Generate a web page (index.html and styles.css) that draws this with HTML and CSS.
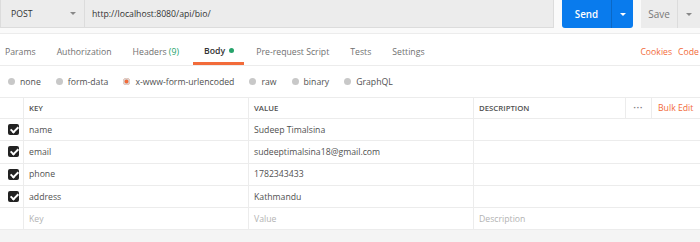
FILE: index.html
```html
<!DOCTYPE html>
<html lang="en">
<head>
    <meta charset="UTF-8">
    <title>POST bio</title>
    <link rel="stylesheet" href="styles.css">
</head>
<body>
    <div class="request-bar">
        <div class="method">
            <span>POST</span>
            <span class="caret"></span>
        </div>
        <div class="url">http://localhost:8080/api/bio/</div>
        <div class="send">
            <span class="send-label">Send</span>
            <span class="send-drop"><span class="caret white"></span></span>
        </div>
        <div class="save">
            <span class="save-label">Save</span>
            <span class="save-drop"><span class="caret"></span></span>
        </div>
    </div>

    <div class="tabs">
        <span class="tab">Params</span>
        <span class="tab">Authorization</span>
        <span class="tab">Headers <span class="count">(9)</span></span>
        <span class="tab active">Body <span class="dot"></span></span>
        <span class="tab">Pre-request Script</span>
        <span class="tab">Tests</span>
        <span class="tab">Settings</span>
        <span class="tab-links"><span>Cookies</span><span>Code</span></span>
    </div>

    <div class="body-types">
        <label class="radio"><span class="circle"></span>none</label>
        <label class="radio"><span class="circle"></span>form-data</label>
        <label class="radio"><span class="circle checked"></span>x-www-form-urlencoded</label>
        <label class="radio"><span class="circle"></span>raw</label>
        <label class="radio"><span class="circle"></span>binary</label>
        <label class="radio"><span class="circle"></span>GraphQL</label>
    </div>

    <div class="kv-table">
        <div class="kv-row head">
            <div class="cell check"></div>
            <div class="cell key">KEY</div>
            <div class="cell value">VALUE</div>
            <div class="cell desc">DESCRIPTION</div>
            <div class="cell more">&bull;&bull;&bull;</div>
            <div class="cell bulk">Bulk Edit</div>
        </div>
        <div class="kv-row">
            <div class="cell check"><span class="box"></span></div>
            <div class="cell key">name</div>
            <div class="cell value">Sudeep Timalsina</div>
            <div class="cell desc wide"></div>
        </div>
        <div class="kv-row">
            <div class="cell check"><span class="box"></span></div>
            <div class="cell key">email</div>
            <div class="cell value">sudeeptimalsina18@gmail.com</div>
            <div class="cell desc wide"></div>
        </div>
        <div class="kv-row">
            <div class="cell check"><span class="box"></span></div>
            <div class="cell key">phone</div>
            <div class="cell value">1782343433</div>
            <div class="cell desc wide"></div>
        </div>
        <div class="kv-row">
            <div class="cell check"><span class="box"></span></div>
            <div class="cell key">address</div>
            <div class="cell value">Kathmandu</div>
            <div class="cell desc wide"></div>
        </div>
        <div class="kv-row placeholder">
            <div class="cell check"></div>
            <div class="cell key">Key</div>
            <div class="cell value">Value</div>
            <div class="cell desc wide">Description</div>
        </div>
    </div>
    <div class="footer"></div>
</body>
</html>
```

FILE: styles.css
```css
body {
    margin: 0;
    font-family: "Open Sans", "Noto Sans", sans-serif;
    font-size: 8.7px;
    color: #505050;
    background: #fff;
    width: 700px;
    height: 242px;
    overflow: hidden;
}
.request-bar {
    display: flex;
    height: 28px;
    padding-bottom: 5px;
    background: #fafafa;
    border-bottom: 1px solid #ececec;
}
.method {
    width: 85px;
    box-sizing: border-box;
    display: flex;
    align-items: center;
    justify-content: space-between;
    padding: 0 8px 0 10px;
    background: #ececec;
    border: 1px solid #dcdcdc;
    border-top: none;
    color: #333;
}
.caret {
    width: 0;
    height: 0;
    border-left: 3px solid transparent;
    border-right: 3px solid transparent;
    border-top: 3px solid #888;
}
.caret.white {
    border-top-color: #fff;
}
.url {
    width: 469px;
    box-sizing: border-box;
    display: flex;
    align-items: center;
    padding-left: 7px;
    background: #ececec;
    border: 1px solid #dcdcdc;
    border-left: none;
    border-top: none;
    color: #333;
}
.send {
    display: flex;
    margin-left: 8px;
    width: 71px;
    background: #097bed;
    border-radius: 0 0 3px 3px;
    color: #fff;
    font-weight: 600;
    font-size: 9.8px;
}
.send-label {
    width: 49px;
    display: flex;
    align-items: center;
    justify-content: center;
}
.send-drop {
    flex: 1;
    display: flex;
    align-items: center;
    justify-content: center;
    border-left: 1px solid #0a68c6;
}
.save {
    display: flex;
    margin-left: 8px;
    flex: 1;
    background: #ececec;
    color: #777;
    font-size: 10px;
}
.save-label {
    width: 36px;
    display: flex;
    align-items: center;
    justify-content: center;
}
.save-drop {
    flex: 1;
    display: flex;
    align-items: center;
    justify-content: center;
    border-left: 1px solid #dcdcdc;
}
.tabs {
    display: flex;
    align-items: flex-end;
    height: 31px;
    padding-left: 5px;
    border-bottom: 1px solid #ececec;
    color: #707070;
}
.tab {
    margin-right: 21px;
    height: 31px;
    padding-top: 6px;
    line-height: 25px;
    box-sizing: border-box;
    white-space: nowrap;
}
.tab.active {
    color: #333;
    font-weight: 600;
    border-bottom: 3px solid #f26b3a;
    padding: 6px 10px 0 11px;
    margin-left: -7px;
    margin-right: 12px;
    line-height: 22px;
}
.count {
    color: #26a36b;
}
.dot {
    display: inline-block;
    width: 5px;
    height: 5px;
    border-radius: 50%;
    background: #26a36b;
    margin-left: 2px;
    vertical-align: 1px;
}
.tab-links {
    margin-left: auto;
    color: #f26b3a;
    display: flex;
    gap: 6px;
    padding-right: 1px;
    height: 31px;
    padding-top: 6px;
    line-height: 25px;
    box-sizing: border-box;
}
.body-types {
    display: flex;
    align-items: center;
    height: 31px;
    padding-left: 8px;
    color: #505050;
}
.radio {
    display: flex;
    align-items: center;
    margin-right: 15px;
}
.circle {
    width: 7px;
    height: 7px;
    border-radius: 50%;
    background: #c8c8c8;
    margin-right: 5px;
}
.circle.checked {
    background: #f26b3a;
    box-shadow: inset 0 0 0 1.5px #d8d8d8;
}
.kv-table {
    border-top: 1px solid #ececec;
}
.kv-row {
    display: flex;
    height: 21.3px;
    border-bottom: 1px solid #ececec;
}
.kv-row.head {
    height: 20px;
    font-size: 7.8px;
    font-weight: 600;
    color: #505050;
}
.cell {
    display: flex;
    align-items: center;
    box-sizing: border-box;
    padding-left: 5px;
    border-right: 1px solid #ececec;
    white-space: nowrap;
}
.check {
    width: 24px;
    padding-left: 8px;
}
.key {
    width: 225px;
}
.value {
    width: 225px;
}
.desc {
    width: 152px;
}
.desc.wide {
    flex: 1;
    border-right: none;
}
.more {
    width: 26px;
    justify-content: center;
    padding-left: 0;
    color: #808080;
    font-size: 6px;
    letter-spacing: 1px;
}
.bulk {
    flex: 1;
    border-right: none;
    padding-left: 6px;
    color: #f26b3a;
    font-weight: 400;
    font-size: 8.7px;
}
.box {
    width: 11px;
    height: 11px;
    border-radius: 2px;
    background: #222;
    position: relative;
}
.box::after {
    content: "";
    position: absolute;
    left: 3.5px;
    top: 1px;
    width: 3px;
    height: 6px;
    border: solid #fff;
    border-width: 0 2px 2px 0;
    transform: rotate(45deg);
}
.placeholder {
    color: #b3b3b3;
}
.footer {
    height: 20px;
    background: #f4f4f4;
}
```
